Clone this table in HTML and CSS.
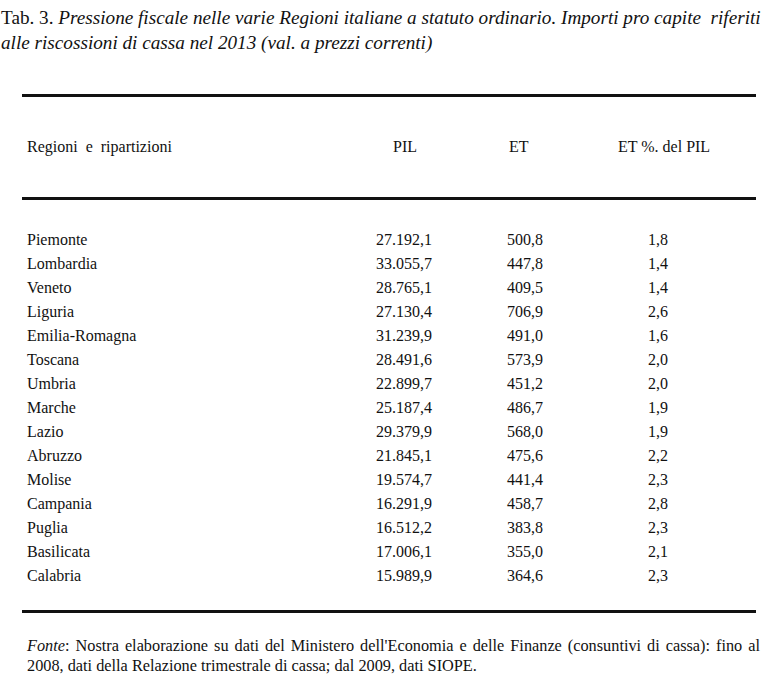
FILE: index.html
```html
<!DOCTYPE html>
<html lang="it">
<head>
    <meta charset="UTF-8">
    <title>Tab. 3 - Pressione fiscale</title>
    <link rel="stylesheet" href="styles.css">
</head>
<body>
    <p class="caption">Tab. 3. <em>Pressione fiscale nelle varie Regioni italiane a statuto ordinario. Importi pro capite &nbsp;riferiti<br>alle riscossioni di cassa nel 2013 (val. a prezzi correnti)</em></p>

    <div class="table">
        <div class="head-row">
            <span>Regioni &nbsp;e &nbsp;ripartizioni</span>
            <span>PIL</span>
            <span>ET</span>
            <span>ET %. del PIL</span>
        </div>

        <div class="body">
            <div class="row"><span>Piemonte</span><span>27.192,1</span><span>500,8</span><span>1,8</span></div>
            <div class="row"><span>Lombardia</span><span>33.055,7</span><span>447,8</span><span>1,4</span></div>
            <div class="row"><span>Veneto</span><span>28.765,1</span><span>409,5</span><span>1,4</span></div>
            <div class="row"><span>Liguria</span><span>27.130,4</span><span>706,9</span><span>2,6</span></div>
            <div class="row"><span>Emilia-Romagna</span><span>31.239,9</span><span>491,0</span><span>1,6</span></div>
            <div class="row"><span>Toscana</span><span>28.491,6</span><span>573,9</span><span>2,0</span></div>
            <div class="row"><span>Umbria</span><span>22.899,7</span><span>451,2</span><span>2,0</span></div>
            <div class="row"><span>Marche</span><span>25.187,4</span><span>486,7</span><span>1,9</span></div>
            <div class="row"><span>Lazio</span><span>29.379,9</span><span>568,0</span><span>1,9</span></div>
            <div class="row"><span>Abruzzo</span><span>21.845,1</span><span>475,6</span><span>2,2</span></div>
            <div class="row"><span>Molise</span><span>19.574,7</span><span>441,4</span><span>2,3</span></div>
            <div class="row"><span>Campania</span><span>16.291,9</span><span>458,7</span><span>2,8</span></div>
            <div class="row"><span>Puglia</span><span>16.512,2</span><span>383,8</span><span>2,3</span></div>
            <div class="row"><span>Basilicata</span><span>17.006,1</span><span>355,0</span><span>2,1</span></div>
            <div class="row"><span>Calabria</span><span>15.989,9</span><span>364,6</span><span>2,3</span></div>
        </div>
    </div>

    <p class="source"><em>Fonte</em>: Nostra elaborazione su dati del Ministero dell'Economia e delle Finanze (consuntivi di cassa): fino al 2008, dati della Relazione trimestrale di cassa; dal 2009, dati SIOPE.</p>
</body>
</html>
```

FILE: styles.css
```css
body {
    margin: 0;
    background-color: #ffffff;
    color: #111111;
    font-family: "Liberation Serif", "DejaVu Serif", serif;
}

.caption {
    margin: 0;
    padding: 5px 0 0 1px;
    font-size: 19.2px;
    line-height: 25px;
    white-space: nowrap;
}

.table {
    margin: 39px 0 0 22px;
    width: 734px;
    font-size: 16px;
}

.head-row {
    display: grid;
    grid-template-columns: 371px 116px 109px 1fr;
    align-items: center;
    height: 100px;
    border-top: 3px solid #111111;
    border-bottom: 3px solid #111111;
}

.head-row span:first-child {
    padding-left: 5px;
}

.body {
    padding: 28px 0 22px;
    border-bottom: 3px solid #111111;
}

.row {
    display: grid;
    grid-template-columns: 354px 131px 141px 1fr;
    align-items: center;
    height: 24px;
}

.row span:first-child {
    padding-left: 5px;
}

.source {
    margin: 23px 7px 0 27px;
    font-size: 16.3px;
    line-height: 20px;
    text-align: justify;
}
```
